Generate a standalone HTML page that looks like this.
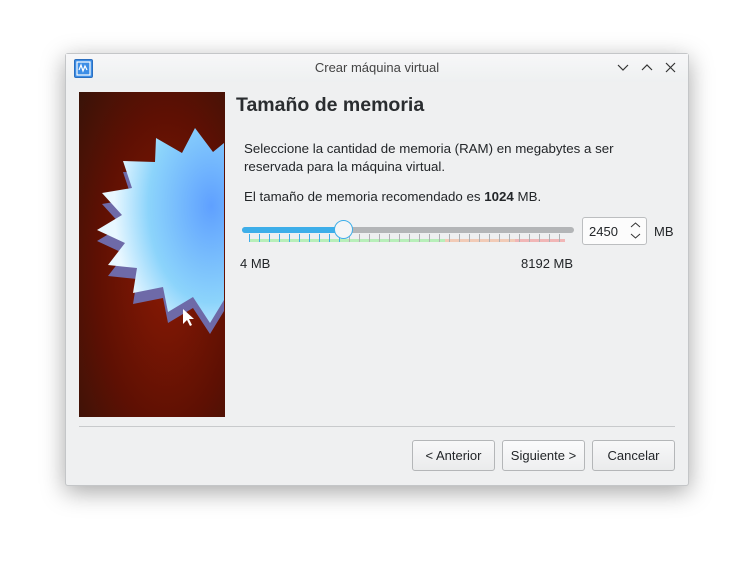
<!DOCTYPE html>
<html><head><meta charset="utf-8"><style>
*{margin:0;padding:0;box-sizing:border-box}
body{width:754px;height:563px;background:#fff;position:relative;overflow:hidden;font-family:"Liberation Sans",sans-serif;color:#232629}
.win{position:absolute;left:65px;top:53px;width:624px;height:433px;background:#eff0f1;border:1px solid #c4c6c8;border-radius:3px;box-shadow:0 6px 24px rgba(0,0,0,.35)}
.tb{position:absolute;left:0;top:0;width:100%;height:28px;background:linear-gradient(#f7f7f8,#eef0f1)}
.a{position:absolute;white-space:nowrap}
.t{font-size:13px;line-height:18px}
.btn{position:absolute;top:386px;height:31px;border:1px solid #b4b6b8;border-radius:3px;background:linear-gradient(#f8f8f9,#eaebec);font-size:13px;text-align:center;line-height:29px}
</style></head><body>
<div class="win">
<div class="tb">
<div class="a" style="left:8px;top:5px;width:19px;height:19px;background:#3d8ee6;border-radius:2px;border:1px solid #2b6fc0"></div>
<svg class="a" style="left:10px;top:7px" width="15" height="15"><rect x="1" y="1" width="13" height="13" fill="none" stroke="#fff" stroke-width="1.2"/><path d="M3 9 L5 4 L7 10 L9 5 L11 9" fill="none" stroke="#fff" stroke-width="1.2"/></svg>
<div class="a t" style="left:0;width:100%;text-align:center;top:5px;color:#444">Crear máquina virtual</div>
<svg class="a" style="left:550px;top:7px" width="64" height="14" fill="none" stroke="#333" stroke-width="1.2"><path d="M2 4 L7 9 L12 4"/><path d="M26 9 L31 4 L36 9"/><path d="M50 2 L59 11 M59 2 L50 11"/></svg>
</div>
<svg class="a" style="left:13px;top:38px" width="146" height="325" viewBox="79 92 146 325">
<defs><radialGradient id="bg" cx="0.6" cy="0.55" r="0.8"><stop offset="0" stop-color="#8a1a04"/><stop offset="0.6" stop-color="#5e1003"/><stop offset="1" stop-color="#3a1308"/></radialGradient>
<radialGradient id="st" cx="0.9" cy="0.4" r="0.9"><stop offset="0" stop-color="#5fa0ff"/><stop offset="0.55" stop-color="#8cd4fb"/><stop offset="0.85" stop-color="#e8f7ff"/></radialGradient></defs>
<rect x="79" y="92" width="146" height="325" fill="url(#bg)"/>
<g transform="translate(0,11)"><polygon fill="#6e6aa8" points="224,143 213,152 195,128 182,153 156,138 155,162 123,161 132,188 102,193 122,215 97,230 125,243 108,265 137,268 133,293 163,287 168,312 193,297 210,323 224,300"/></g>
<polygon fill="url(#st)" points="224,143 213,152 195,128 182,153 156,138 155,162 123,161 132,188 102,193 122,215 97,230 125,243 108,265 137,268 133,293 163,287 168,312 193,297 210,323 224,300"/>
<path d="M183 309 L183 324 L187 320 L190 326 L192 325 L189 319 L194 319 Z" fill="#fff"/>
</svg>
<div class="a" style="left:170px;top:40px;font-size:19.5px;font-weight:bold;color:#2a2d30">Tamaño de memoria</div>
<div class="a t" style="left:178px;top:86px;font-size:13.3px">Seleccione la cantidad de memoria (RAM) en megabytes a ser<br>reservada para la máquina virtual.</div>
<div class="a t" style="left:178px;top:134px;font-size:13.3px">El tamaño de memoria recomendado es <b>1024</b> MB.</div>
<div class="a" style="left:176px;top:173px;width:332px;height:6px;border-radius:3px;background:#b3b5b7"></div>
<div class="a" style="left:176px;top:173px;width:103px;height:6px;border-radius:3px;background:#3daee9"></div>
<div class="a" style="left:183px;top:185px;width:196px;height:3px;background:#b7efb9"></div>
<div class="a" style="left:379px;top:185px;width:70px;height:3px;background:#f2cbb7"></div>
<div class="a" style="left:449px;top:185px;width:50px;height:3px;background:#f1b6b6"></div>
<svg class="a" style="left:183px;top:180px" width="320" height="10"><g stroke="#aeb0b2" stroke-width="1">
<path d="M0.5 0v8M10.5 0v8M20.5 0v8M30.5 0v8M40.5 0v8M50.5 0v8M60.5 0v8M70.5 0v8M80.5 0v8M90.5 0v8" stroke="#3daee9"/>
<path d="M100.5 0v8M110.5 0v8M120.5 0v8M130.5 0v8M140.5 0v8M150.5 0v8M160.5 0v8M170.5 0v8M180.5 0v8M190.5 0v8M200.5 0v8M210.5 0v8M220.5 0v8M230.5 0v8M240.5 0v8M250.5 0v8M260.5 0v8M270.5 0v8M280.5 0v8M290.5 0v8M300.5 0v8M310.5 0v8"/></g></svg>
<div class="a" style="left:268px;top:166px;width:19px;height:19px;border-radius:50%;background:#f4f5f6;border:1px solid #3daee9"></div>
<div class="a" style="left:516px;top:163px;width:65px;height:28px;background:#fcfcfc;border:1px solid #bcbec0;border-radius:3px"></div>
<div class="a t" style="left:523px;top:169px">2450</div>
<svg class="a" style="left:563px;top:167px" width="14" height="20" fill="none" stroke="#333" stroke-width="1"><path d="M2 6 L6.5 2 L11 6"/><path d="M2 13 L6.5 17 L11 13"/></svg>
<div class="a t" style="left:588px;top:169px">MB</div>
<div class="a t" style="left:174px;top:201px">4 MB</div>
<div class="a t" style="left:455px;top:201px">8192 MB</div>
<div class="a" style="left:13px;top:372px;width:596px;height:1px;background:#c8cacc"></div>
<div class="btn" style="left:346px;width:83px">&lt; Anterior</div>
<div class="btn" style="left:436px;width:83px;background:linear-gradient(#fbfbfc,#eeeff0)">Siguiente &gt;</div>
<div class="btn" style="left:526px;width:83px">Cancelar</div>
</div>
</body></html>
